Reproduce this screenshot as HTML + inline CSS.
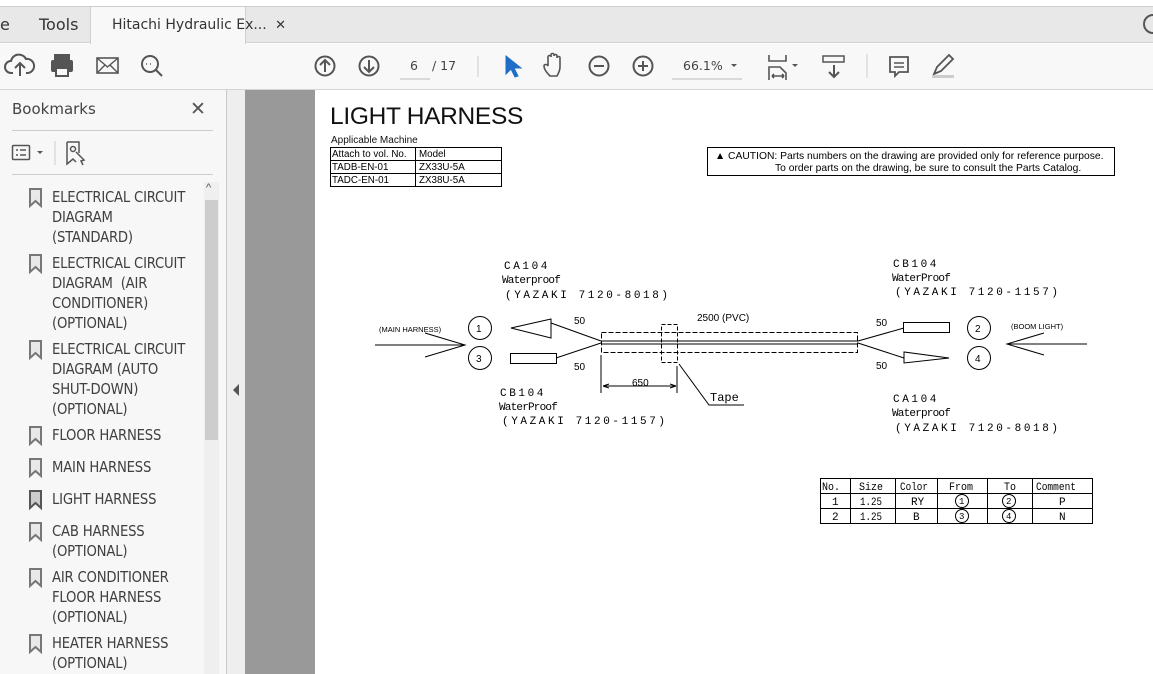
<!DOCTYPE html>
<html><head><meta charset="utf-8">
<style>
*{margin:0;padding:0;box-sizing:border-box}
body{width:1153px;height:674px;overflow:hidden;background:#fff;font-family:"Liberation Sans",sans-serif;position:relative}
.a{position:absolute}
.ui{font-family:"Segoe UI","DejaVu Sans","Liberation Sans",sans-serif}
.bm{position:absolute;left:52px;font-size:14.7px;color:#404040;line-height:20px;font-family:"DejaVu Sans Condensed","Liberation Sans",sans-serif;letter-spacing:-0.2px}
</style></head><body>
<div class="a" style="left:0;top:0;width:1153px;height:7px;background:#fff;border-bottom:1px solid #ccc"></div>
<div class="a" style="left:0;top:7px;width:1153px;height:36px;background:#e8e8e8;border-bottom:1px solid #d0d0d0"></div>
<div class="a ui" style="left:0;top:15px;font-size:16px;color:#333">e</div>
<div class="a ui" style="left:39px;top:15px;font-size:16px;color:#333">Tools</div>
<div class="a" style="left:90px;top:7px;width:156px;height:37px;background:#f8f8f8;border-left:1px solid #d0d0d0;border-right:1px solid #d0d0d0"></div>
<div class="a ui" style="left:112px;top:17px;font-size:14px;color:#333">Hitachi Hydraulic Ex... <span style="font-size:13px;margin-left:4px">✕</span></div>
<div class="a" style="left:1143px;top:14px;width:20px;height:20px;border:2px solid #555;border-radius:50%"></div>
<div class="a" style="left:0;top:44px;width:1153px;height:46px;background:#f8f8f8;border-bottom:1px solid #d5d5d5"></div>
<svg class="a" style="left:0;top:44px" width="1153" height="46" fill="none" stroke="#555" stroke-width="2">
 <path d="M13 29h-2a6 6 0 0 1 0-12a8 8 0 0 1 15-2a6 6 0 0 1 2 14h-2M20 32V19M15 24l5-5 5 5"/>
 <rect x="55" y="11" width="14" height="5" fill="#555"/><rect x="52" y="17" width="20" height="10" rx="1" fill="#555"/><rect x="56" y="24" width="12" height="8" fill="#f8f8f8"/>
 <rect x="97" y="14" width="21" height="15" stroke-width="1.6"/><path d="M97 14l10.5 9 10.5-9M97 29l8-8M118 29l-8-8" stroke-width="1.4"/>
 <circle cx="150" cy="20" r="8"/><path d="M156 26l6 6"/><path d="M146 20h1M150 20h1M154 20h0" stroke-width="1.5"/>
 <circle cx="325" cy="22" r="9.5"/><path d="M325 28V16M320 21l5-5 5 5"/>
 <circle cx="369" cy="22" r="9.5"/><path d="M369 16v12M364 23l5 5 5-5"/>
 <path d="M400 35h30" stroke="#bbb" stroke-width="1"/>
 <path d="M478 12v21" stroke="#ccc" stroke-width="1"/>
 <path d="M506 12v18l5-5 4 8 3-1-4-8h7z" fill="#1e6ec8" stroke="#1e6ec8" stroke-width="1"/>
 <path d="M550 32c-3-3-6-7-6-10 0-2 3-2 4 0v-9c0-2 3-2 3 0v-2c0-2 3-2 3 0v1c0-2 3-2 3 0v2c0-2 3-2 3 0v9c0 4-2 7-3 9z" stroke-width="1.6"/>
 <circle cx="599" cy="22" r="9.5"/><path d="M594 22h10"/>
 <circle cx="643" cy="22" r="9.5"/><path d="M638 22h10M643 17v10"/>
 <path d="M672 35h70" stroke="#bbb" stroke-width="1"/>
 <path d="M731 20l3 3 3-3z" fill="#555" stroke="none"/>
 <path d="M769 11v6h17v-6M769 36V23h11l6 6v7M772 32h12M772 32l2-2M772 32l2 2M784 32l-2-2M784 32l-2 2" stroke-width="1.6"/>
 <path d="M792 20l3 3 3-3z" fill="#555" stroke="none"/>
 <rect x="823" y="12" width="21" height="6" stroke-width="1.5"/><path d="M834 21v12M829 28l5 5 5-5"/>
 <path d="M867 10v24" stroke="#ccc" stroke-width="1"/>
 <path d="M890 13h18v15h-9l-4 4v-4h-5z" stroke-width="1.8"/><path d="M894 19h10M894 23h10" stroke-width="1.5"/>
 <path d="M934 30l3-7 12-12 4 4-12 12z" stroke-width="1.8"/><rect x="932" y="31" width="22" height="3" fill="#ccc" stroke="none"/>
</svg>
<div class="a ui" style="left:410px;top:58px;font-size:12.5px;color:#444">6 <span style="margin-left:10px">/ 17</span></div>
<div class="a ui" style="left:683px;top:58px;font-size:12.5px;color:#444">66.1%</div>
<div class="a" style="left:0;top:90px;width:226px;height:584px;background:#f7f7f7"></div>
<div class="a ui" style="left:12px;top:100px;font-size:15px;color:#444">Bookmarks</div>
<div class="a" style="left:190px;top:98px;font-size:19px;color:#555">✕</div>
<div class="a" style="left:12px;top:130px;width:201px;height:1px;background:#ccc"></div>
<svg class="a" style="left:0;top:135px" width="226" height="40" fill="none" stroke="#555" stroke-width="1.5">
 <rect x="12.5" y="10.5" width="17" height="14" rx="1"/><path d="M16 15h2M20 15h6M16 20h2M20 20h6"/>
 <path d="M37 16l3 3 3-3z" fill="#555" stroke="none"/>
 <path d="M55 6v24" stroke="#ccc" stroke-width="1"/>
 <path d="M67 7h12v11M67 7v22l6-5 3 3"/><circle cx="73" cy="14" r="2.5"/><path d="M76 17l8 8-3 1 2 4"/>
</svg>
<div class="a" style="left:12px;top:174px;width:201px;height:1px;background:#ccc"></div>
<div class="a" style="left:204px;top:182px;width:15px;height:492px;background:#efefef"></div>
<div class="a" style="left:205px;top:200px;width:13px;height:240px;background:#cdcdcd"></div>
<div class="a" style="left:206px;top:182px;font-size:11px;color:#555">&#94;</div>
<svg class="a" style="left:0;top:0" width="226" height="674">
 <defs><path id="bk" d="M0 0h11v17l-5.5-5-5.5 5z" fill="#e8e8e8" stroke="#777" stroke-width="2"/></defs>
 <use href="#bk" x="30" y="189"/><use href="#bk" x="30" y="255"/><use href="#bk" x="30" y="341"/>
 <use href="#bk" x="30" y="427"/><use href="#bk" x="30" y="459"/>
 <path d="M30 491h11v17l-5.5-5-5.5 5z" fill="#ccc" stroke="#555" stroke-width="2"/>
 <use href="#bk" x="30" y="523"/><use href="#bk" x="30" y="569"/><use href="#bk" x="30" y="635"/>
</svg>
<div class="bm" style="top:188px">ELECTRICAL CIRCUIT<br>DIAGRAM<br>(STANDARD)</div>
<div class="bm" style="top:254px">ELECTRICAL CIRCUIT<br>DIAGRAM &nbsp;(AIR<br>CONDITIONER)<br>(OPTIONAL)</div>
<div class="bm" style="top:340px">ELECTRICAL CIRCUIT<br>DIAGRAM (AUTO<br>SHUT-DOWN)<br>(OPTIONAL)</div>
<div class="bm" style="top:426px">FLOOR HARNESS</div>
<div class="bm" style="top:458px">MAIN HARNESS</div>
<div class="bm" style="top:490px">LIGHT HARNESS</div>
<div class="bm" style="top:522px">CAB HARNESS<br>(OPTIONAL)</div>
<div class="bm" style="top:568px">AIR CONDITIONER<br>FLOOR HARNESS<br>(OPTIONAL)</div>
<div class="bm" style="top:634px">HEATER HARNESS<br>(OPTIONAL)</div>
<div class="a" style="left:226px;top:90px;width:19px;height:584px;background:#eeeeee;border-left:1px solid #c8c8c8"></div>
<div class="a" style="left:233px;top:384px;width:0;height:0;border-top:6px solid transparent;border-bottom:6px solid transparent;border-right:6px solid #555"></div>
<div class="a" style="left:245px;top:90px;width:70px;height:584px;background:#999"></div>
<div class="a" style="left:330px;top:103px;font-size:24.5px;color:#111;letter-spacing:-0.3px">LIGHT HARNESS</div>
<div class="a" style="left:331px;top:135px;font-size:10px;color:#111">Applicable Machine</div>
<svg class="a" style="left:315px;top:90px" width="838" height="584" font-family="Liberation Sans,sans-serif">
 <g stroke="#000" fill="none" stroke-width="1">
  <rect x="15.5" y="57.5" width="171" height="39"/><path d="M15.5 70.5h171M15.5 83.5h171M100.5 57.5v39"/>
  <rect x="392.5" y="57.5" width="407" height="28"/>
 </g>
 <g font-size="9.8" fill="#000">
  <text x="17" y="67">Attach to vol. No.</text><text x="104" y="67">Model</text>
  <text x="17" y="80">TADB-EN-01</text><text x="104" y="80">ZX33U-5A</text>
  <text x="17" y="93">TADC-EN-01</text><text x="104" y="93">ZX38U-5A</text>
  <text x="400" y="69" font-size="10.3">▲ CAUTION: Parts numbers on the drawing are provided only for reference purpose.</text>
  <text x="460" y="81" font-size="10.3">To order parts on the drawing, be sure to consult the Parts Catalog.</text>
 </g>
 <g stroke="#000" fill="none" stroke-width="1">
  <path d="M60 255h90M110 243l40 12-40 12"/>
  <circle cx="165" cy="238" r="11.5"/><circle cx="165" cy="268" r="11.5"/>
  <path d="M196 238l40-9v19z"/><rect x="195.5" y="263.5" width="46" height="10"/>
  <path d="M236 233l50 18M241 268l45-15"/>
  <path d="M286.5 242.5h256v20h-256z" stroke-dasharray="5 2"/>
  <path d="M286 251h257M286 254h257"/>
  <path d="M346.5 234.5h16v38h-16z" stroke-dasharray="4 2"/>
  <path d="M286 265v38M362 276v27M288 296h73M288 296l6-2M288 296l6 2M361 296l-6-2M361 296l-6 2"/>
  <path d="M364 274l30 41h35"/>
  <path d="M543 251l46-13M543 253l46 15"/>
  <rect x="588.5" y="232.5" width="46" height="10"/><path d="M589 262v11l45-5z"/>
  <circle cx="664" cy="238" r="11.5"/><circle cx="664" cy="268" r="11.5"/>
  <path d="M772 254h-80M729 243l-37 11 37 11"/>
 </g>
 <g font-family="Liberation Mono,monospace" fill="#000">
  <text x="189" y="179" font-size="11" letter-spacing="2.6">CA104</text>
  <text x="187" y="193" font-size="11" letter-spacing="-0.8">Waterproof</text>
  <text x="190" y="208" font-size="11" letter-spacing="2.6">(YAZAKI 7120-8018)</text>
  <text x="185" y="306" font-size="11" letter-spacing="2.6">CB104</text>
  <text x="184" y="320" font-size="11" letter-spacing="-0.8">WaterProof</text>
  <text x="187" y="334" font-size="11" letter-spacing="2.6">(YAZAKI 7120-1157)</text>
  <text x="578" y="177" font-size="11" letter-spacing="2.6">CB104</text>
  <text x="577" y="191" font-size="11" letter-spacing="-0.8">WaterProof</text>
  <text x="580" y="205" font-size="11" letter-spacing="2.6">(YAZAKI 7120-1157)</text>
  <text x="578" y="312" font-size="11" letter-spacing="2.6">CA104</text>
  <text x="577" y="326" font-size="11" letter-spacing="-0.8">Waterproof</text>
  <text x="580" y="341" font-size="11" letter-spacing="2.6">(YAZAKI 7120-8018)</text>
  <text x="395" y="311" font-size="12">Tape</text>
 </g>
 <g font-family="Liberation Sans Narrow,Liberation Sans,sans-serif" fill="#000" font-size="10">
  <text x="64" y="242" font-size="7.5">(MAIN HARNESS)</text>
  <text x="696" y="239" font-size="7.5">(BOOM LIGHT)</text>
  <text x="161" y="242">1</text><text x="161" y="272">3</text>
  <text x="660" y="242">2</text><text x="660" y="272">4</text>
  <text x="259" y="234">50</text><text x="259" y="280">50</text>
  <text x="561" y="236">50</text><text x="561" y="279">50</text>
  <text x="382" y="231">2500 (PVC)</text><text x="317" y="296">650</text>
 </g>
 <g stroke="#000" fill="none" stroke-width="1">
  <rect x="505.5" y="388.5" width="272" height="45"/>
  <path d="M505.5 403.5h272M505.5 418.5h272M535.5 388.5v45M580.5 388.5v45M622.5 388.5v45M672.5 388.5v45M717.5 388.5v45"/>
  <circle cx="647" cy="411" r="6.5"/><circle cx="647" cy="426" r="6.5"/>
  <circle cx="694" cy="411" r="6.5"/><circle cx="694" cy="426" r="6.5"/>
 </g>
 <g font-family="Liberation Mono,monospace" fill="#000" font-size="11" transform="translate(0,0)">
  <g transform="scale(1,1)">
  <text x="507" y="400" textLength="18" lengthAdjust="spacingAndGlyphs">No.</text><text x="544" y="400" textLength="24" lengthAdjust="spacingAndGlyphs">Size</text><text x="585" y="400" textLength="28" lengthAdjust="spacingAndGlyphs">Color</text><text x="634" y="400" textLength="24" lengthAdjust="spacingAndGlyphs">From</text><text x="689" y="400" textLength="12" lengthAdjust="spacingAndGlyphs">To</text><text x="721" y="400" textLength="40" lengthAdjust="spacingAndGlyphs">Comment</text>
  <text x="517" y="415">1</text><text x="545" y="415" textLength="22" lengthAdjust="spacingAndGlyphs">1.25</text><text x="596" y="415">RY</text><text x="644" y="414" font-size="9">1</text><text x="691" y="414" font-size="9">2</text><text x="744" y="415">P</text>
  <text x="517" y="430">2</text><text x="545" y="430" textLength="22" lengthAdjust="spacingAndGlyphs">1.25</text><text x="598" y="430">B</text><text x="644" y="429" font-size="9">3</text><text x="691" y="429" font-size="9">4</text><text x="744" y="430">N</text>
  </g>
 </g>
</svg>
</body></html>
